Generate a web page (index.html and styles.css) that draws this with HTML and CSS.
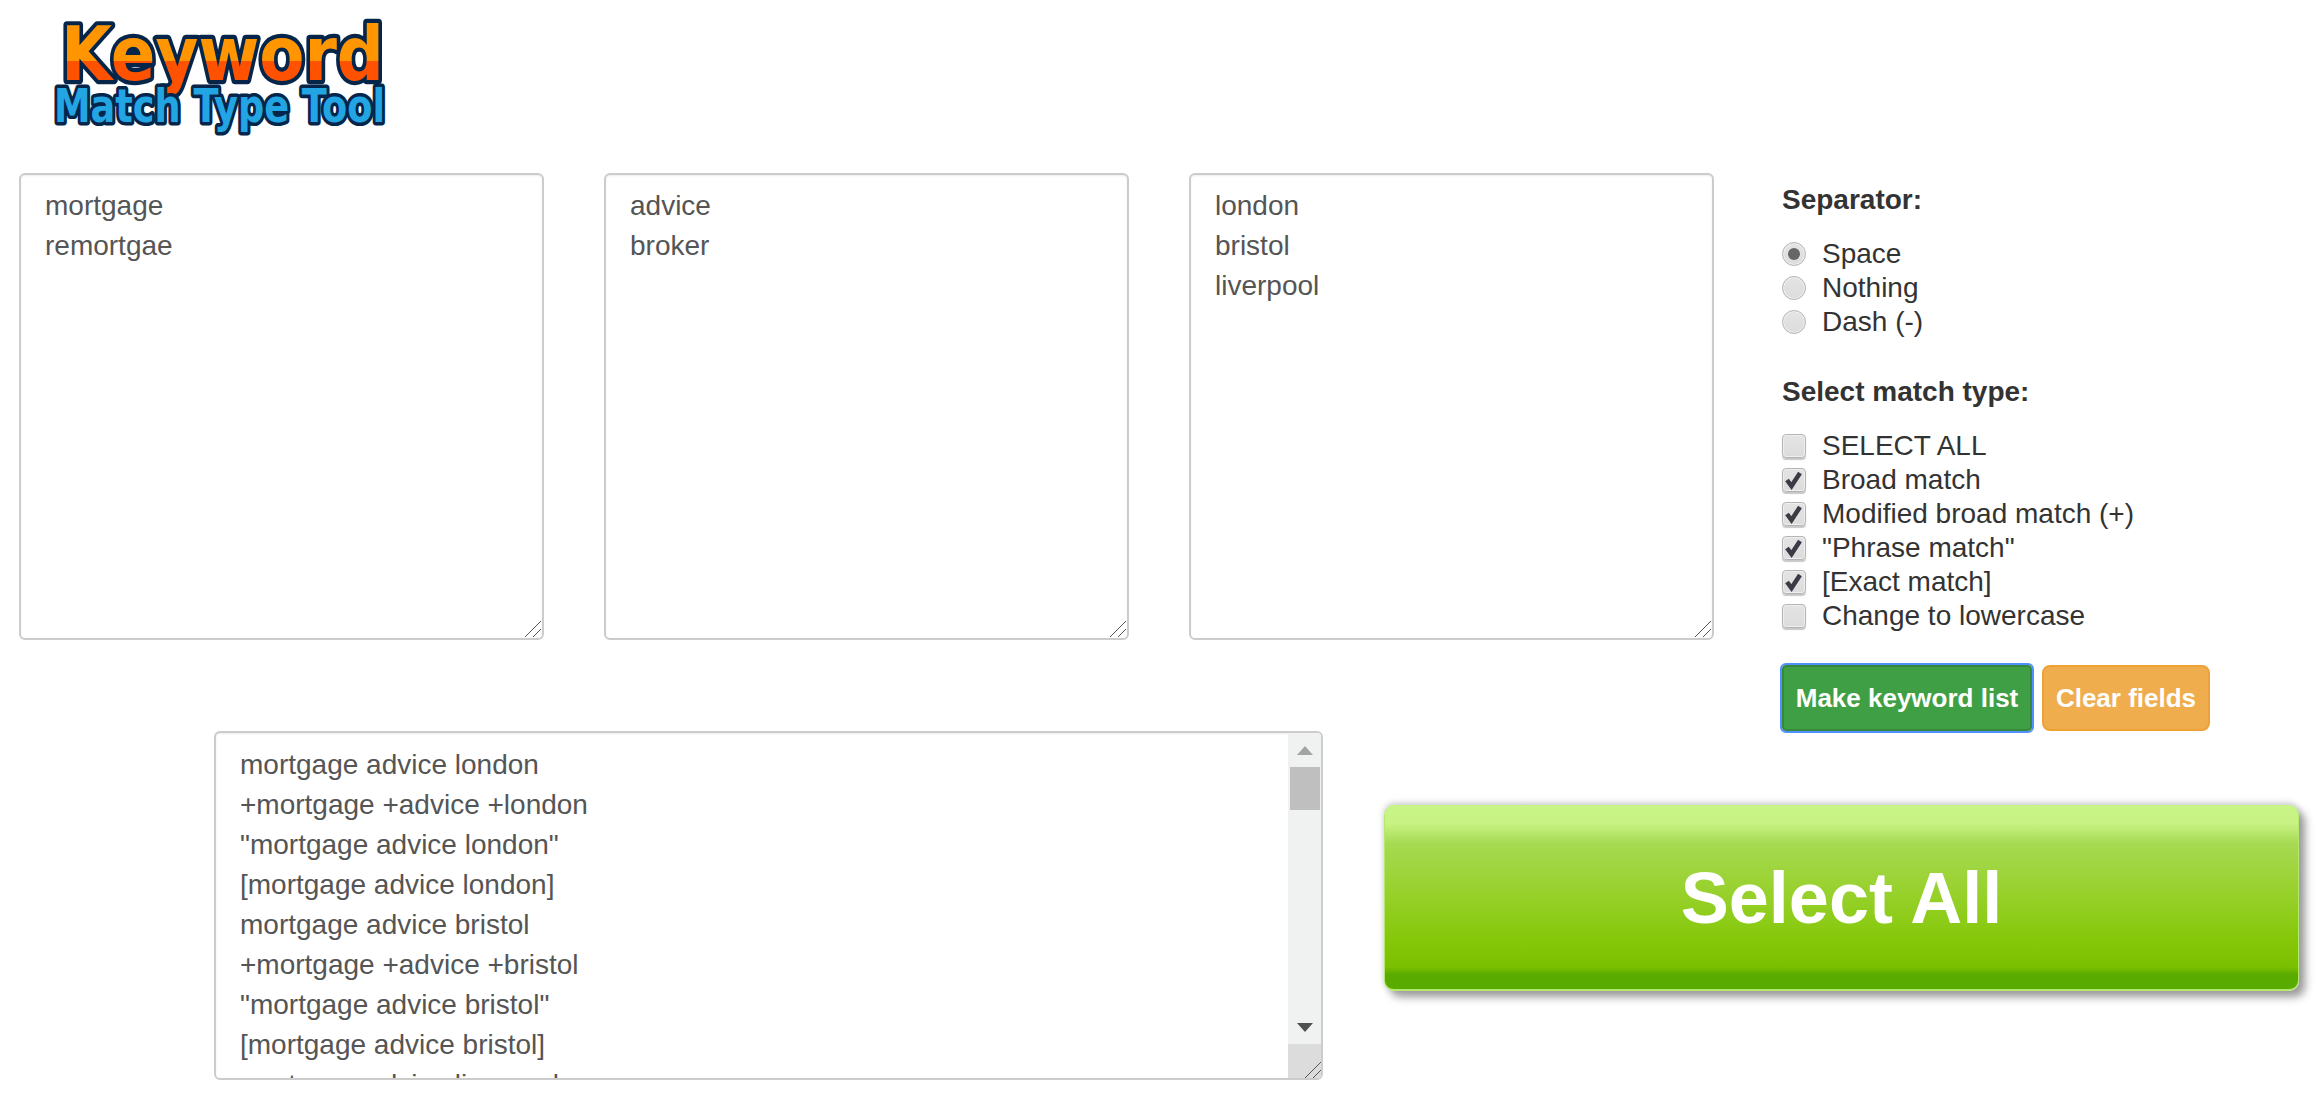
FILE: index.html
```html
<!DOCTYPE html>
<html lang="en">
<head>
    <meta charset="UTF-8">
    <meta name="viewport" content="width=device-width, initial-scale=1.0">
    <title>Keyword Match Type Tool</title>
    <link rel="stylesheet" href="styles.css">
</head>
<body>

<!-- Logo -->
<div class="header">
    <svg class="logo" width="370" height="160" viewBox="0 0 370 160" role="img" aria-label="Keyword Match Type Tool">
        <defs>
            <linearGradient id="logoOrange" gradientUnits="userSpaceOnUse" x1="0" y1="0" x2="0" y2="100">
                <stop offset="0" stop-color="#ff9500"/>
                <stop offset="0.51" stop-color="#ff9500"/>
                <stop offset="0.51" stop-color="#ff5200"/>
                <stop offset="1" stop-color="#ff5200"/>
            </linearGradient>
        </defs>
        <g transform="scale(1 1.2)">
            <text class="logo-top" x="21" y="66.7" textLength="323" lengthAdjust="spacingAndGlyphs" fill="url(#logoOrange)">Keyword</text>
            <text class="logo-bottom" x="14" y="101.5" textLength="331" lengthAdjust="spacingAndGlyphs">Match Type Tool</text>
        </g>
    </svg>
</div>

<!-- Kolom kata kunci dan pengaturan -->
<div class="inputs">
    <div class="field">
        <textarea class="box">mortgage
remortgae</textarea>
        <svg class="grip" width="16" height="16" viewBox="0 0 16 16" aria-hidden="true"><path d="M0 16L16 0M8 16l8-8"/></svg>
    </div>
    <div class="field">
        <textarea class="box">advice
broker</textarea>
        <svg class="grip" width="16" height="16" viewBox="0 0 16 16" aria-hidden="true"><path d="M0 16L16 0M8 16l8-8"/></svg>
    </div>
    <div class="field">
        <textarea class="box">london
bristol
liverpool</textarea>
        <svg class="grip" width="16" height="16" viewBox="0 0 16 16" aria-hidden="true"><path d="M0 16L16 0M8 16l8-8"/></svg>
    </div>

    <div class="side">
        <div class="heading heading-first">Separator:</div>
        <label class="option"><input type="radio" name="sep" checked>Space</label>
        <label class="option"><input type="radio" name="sep">Nothing</label>
        <label class="option"><input type="radio" name="sep">Dash (-)</label>

        <div class="heading">Select match type:</div>
        <label class="option"><input type="checkbox">SELECT ALL</label>
        <label class="option"><input type="checkbox" checked>Broad match</label>
        <label class="option"><input type="checkbox" checked>Modified broad match (+)</label>
        <label class="option"><input type="checkbox" checked>"Phrase match"</label>
        <label class="option"><input type="checkbox" checked>[Exact match]</label>
        <label class="option"><input type="checkbox">Change to lowercase</label>

        <div class="actions">
            <button class="btn btn-make">Make keyword list</button>
            <button class="btn btn-clear">Clear fields</button>
        </div>
    </div>
</div>

<!-- Hasil -->
<div class="results">
    <div class="field field-output">
        <textarea class="box output">mortgage advice london
+mortgage +advice +london
"mortgage advice london"
[mortgage advice london]
mortgage advice bristol
+mortgage +advice +bristol
"mortgage advice bristol"
[mortgage advice bristol]
mortgage advice liverpool
+mortgage +advice +liverpool
"mortgage advice liverpool"
[mortgage advice liverpool]
mortgage broker london
+mortgage +broker +london
"mortgage broker london"
[mortgage broker london]
mortgage broker bristol
+mortgage +broker +bristol
"mortgage broker bristol"
[mortgage broker bristol]
mortgage broker liverpool
+mortgage +broker +liverpool
"mortgage broker liverpool"
[mortgage broker liverpool]
remortgae advice london
+remortgae +advice +london
"remortgae advice london"
[remortgae advice london]
remortgae advice bristol
+remortgae +advice +bristol
"remortgae advice bristol"
[remortgae advice bristol]
remortgae advice liverpool
+remortgae +advice +liverpool
"remortgae advice liverpool"
[remortgae advice liverpool]
remortgae broker london
+remortgae +broker +london
"remortgae broker london"
[remortgae broker london]
remortgae broker bristol
+remortgae +broker +bristol
"remortgae broker bristol"
[remortgae broker bristol]
remortgae broker liverpool
+remortgae +broker +liverpool
"remortgae broker liverpool"
[remortgae broker liverpool]</textarea>
        <!-- Scrollbar digambar sendiri -->
        <div class="scrollbar" aria-hidden="true">
            <div class="sb-btn"><svg width="16" height="9" viewBox="0 0 16 9"><path d="M8 0l8 9H0z" fill="#a3a3a3"/></svg></div>
            <div class="sb-track"><div class="sb-thumb"></div></div>
            <div class="sb-btn"><svg width="16" height="9" viewBox="0 0 16 9"><path d="M0 0h16L8 9z" fill="#505050"/></svg></div>
            <div class="sb-corner"></div>
        </div>
        <svg class="grip" width="16" height="16" viewBox="0 0 16 16" aria-hidden="true"><path d="M0 16L16 0M8 16l8-8"/></svg>
    </div>
    <button class="select-all">Select All</button>
</div>

</body>
</html>
```

FILE: styles.css
```css
* {
    box-sizing: border-box;
}

body {
    margin: 0;
    font-family: 'Liberation Sans', Arial, sans-serif;
    font-size: 28px;
    color: #333;
    background: #fff;
}

.header {
    height: 173px;
    padding-left: 40px;
}

.logo {
    display: block;
}

.logo text {
    font-family: 'DejaVu Sans', sans-serif;
    font-weight: bold;
    stroke: #05264a;
    stroke-linejoin: round;
    paint-order: stroke;
}

.logo-top {
    font-size: 63px;
    stroke-width: 7px;
}

.logo-bottom {
    font-size: 38px;
    fill: #22a5e2;
    stroke-width: 6px;
}

.inputs {
    display: flex;
    align-items: flex-start;
    gap: 60px;
    height: 558px;
    padding-left: 19px;
}

.field {
    position: relative;
    width: 525px;
    height: 467px;
    flex: none;
}

.field-output {
    width: 1109px;
    height: 349px;
}

.box {
    display: block;
    width: 100%;
    height: 100%;
    padding: 11px 24px;
    border: 2px solid #ccc;
    border-radius: 6px;
    font-family: inherit;
    font-size: 28px;
    line-height: 40px;
    color: #555;
    background: #fff;
    outline: none;
    resize: none;
    box-shadow: inset 0 1px 2px rgba(0, 0, 0, 0.08);
}

.output {
    padding-top: 12px;
}

.grip {
    position: absolute;
    right: 3px;
    bottom: 3px;
    pointer-events: none;
}

.grip path {
    fill: none;
    stroke: #555;
    stroke-width: 1;
}

.side {
    margin-left: 8px;
    width: 500px;
}

.heading {
    font-weight: bold;
    line-height: 34px;
    margin-top: 36px;
    margin-bottom: 20px;
}

.heading-first {
    margin-top: 10px;
}

.option {
    display: flex;
    align-items: center;
    height: 34px;
}

.option input {
    appearance: none;
    margin: 0 16px 0 0;
    width: 24px;
    height: 24px;
    flex: none;
    border: 1px solid #b4b4b4;
    background: linear-gradient(#e4e4e4, #dcdcdc);
    position: relative;
}

.option input[type="radio"] {
    border-radius: 50%;
    box-shadow: inset 0 0 0 1px #efefef;
}

.option input[type="radio"]:checked::after {
    content: "";
    position: absolute;
    top: 5px;
    left: 5px;
    width: 12px;
    height: 12px;
    border-radius: 50%;
    background: #666;
}

.option input[type="checkbox"] {
    border-radius: 4px;
    box-shadow: 0 2px 1px #c8c8c8, inset 0 0 0 1px #efefef;
}

.option input[type="checkbox"]:checked {
    background: url("data:image/svg+xml,%3Csvg xmlns='http://www.w3.org/2000/svg' width='22' height='22'%3E%3Cpath d='M4 11l4.5 6L17 4' fill='none' stroke='%233c3a45' stroke-width='4.5'/%3E%3C/svg%3E") center no-repeat, linear-gradient(#e4e4e4, #dcdcdc);
}

.actions {
    display: flex;
    gap: 10px;
    margin-top: 32px;
}

.btn {
    height: 66px;
    padding: 0;
    border: 2px solid;
    border-radius: 8px;
    font-family: inherit;
    font-size: 26px;
    font-weight: bold;
    color: #fff;
    white-space: nowrap;
}

.btn-make {
    width: 250px;
    background: #3f9f45;
    border-color: #37873d;
    border-radius: 4px;
    outline: 2px solid #4d90fe;
}

.btn-clear {
    width: 168px;
    background: #f0ad4e;
    border-color: #eea236;
}

.results {
    display: flex;
    align-items: flex-start;
    gap: 61px;
    padding-left: 214px;
}

.scrollbar {
    position: absolute;
    top: 2px;
    right: 2px;
    bottom: 2px;
    width: 33px;
    display: flex;
    flex-direction: column;
    background: #f0f1f1;
    border-radius: 0 4px 4px 0;
    overflow: hidden;
}

.sb-btn {
    height: 34px;
    flex: none;
    display: flex;
    align-items: center;
    justify-content: center;
}

.sb-track {
    flex: 1;
}

.sb-thumb {
    height: 43px;
    margin: 0 1px 0 2px;
    background: #bfbfbf;
}

.sb-corner {
    height: 34px;
    flex: none;
    background: #dcdcdc;
}

.field-output .grip {
    right: 2px;
    bottom: 2px;
}

.select-all {
    width: 915px;
    height: 186px;
    margin-top: 74px;
    padding: 2px 0 0;
    border: 1px solid #b4e86e;
    border-bottom-width: 2px;
    border-top: none;
    border-radius: 10px;
    font-family: inherit;
    font-size: 72px;
    font-weight: bold;
    color: #fff;
    background: linear-gradient(#c9f586 0%, #c8f384 10%, #a6da52 21%, #96d028 50%, #84c708 75%, #7bc000 88%, #5aab00 92%, #5aab00 100%);
    box-shadow: 6px 6px 8px #999, 0 -2px 6px #ccc;
}
```
